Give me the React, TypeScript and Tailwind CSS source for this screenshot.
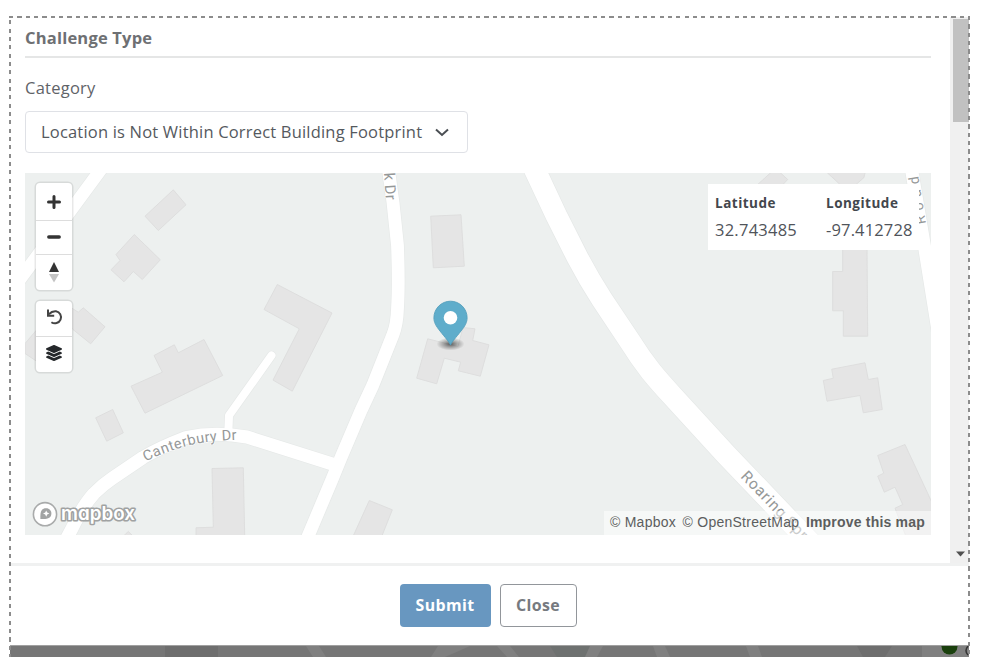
import React from 'react';
import { FaLayerGroup } from 'react-icons/fa';

const buildings = [
  '173.3,189.3 186,204.3 158.3,230 145,215.7',
  '134.3,234 160.3,259.3 142.3,279 133.3,271 124,281.3 111,269.3 120,260 116,254',
  '83.3,307.3 105,326.3 90.7,343.3 73,329 60,315 66,304 78.3,311.7',
  '25,343 37,329 52,345 37,361 25,353',
  '277.3,284 332,312.5 292.3,390.7 273,379.6 299.3,328.3 264,309',
  '204,339 222.7,375 145,412.7 131,385.7 162.3,371.7 154,355 174.3,344.3 178.3,352.3',
  '112.7,409 123.3,432.3 106.7,440.7 95.7,417.3',
  '212,468 243.3,467.3 244.7,536 196,536 196,527.3 213.3,526.7',
  '123,536 128.3,531 133.5,536',
  '369.3,500 392.3,509.3 381.7,536 353,536',
  '430.7,215.7 461,214.3 464.3,265.7 433.3,267.3',
  '427.7,338.3 458,346 463,327 475,328.3 472.7,340 489,344.3 480.3,375.7 458.3,370.3 460.7,361.7 444.3,357.7 436.7,383.3 416.7,377.7',
  '842.7,245 867,245 867.7,335.7 843.3,335.7 843.3,310.3 832.7,310.3 832.7,271 842.7,271',
  '831.7,368.7 865,362.3 868.3,379 877.7,377.3 882.3,409 863.3,412.3 860,395 827,400.7 823.3,380 833.3,377.7',
  '905,444 931.5,501 931.5,536 906,536 895,507.7 902.7,504 895,486.7 884.3,491.7 877.7,475.7 883.7,472.7 877.7,455',
  '757.7,184 772,171 779,171 787.7,179 782,185',
  '826,171 865.3,171 864,177 856,184 840,184',
];

const roads = [
  { d: 'M106 162 L18 281.5', width: 12.6 },
  { d: 'M387 160 L389 173 L393 202 L397.5 245 Q399 284 397.5 308 Q397 324 393 334 L372.7 385 L361 410 L341 457 L332 479 L305 543', width: 12.8 },
  { d: 'M531 161 L556.3 215 L577.5 257 Q589 279 602 299 L630 341 Q640 357 651 371 Q660 382 672 395 L726 454 L812 544', width: 21.5 },
  { d: 'M63 545 L72 528 Q83 505 94 493 Q103 484 112 478 L143 457 Q160 447 186 437 Q215 431 247 436.5 L337 465', width: 13 },
  { d: 'M228.3 432 L229 415 L271.5 355', width: 8 },
  { d: 'M910 160 L924 243 L938 330', width: 13 },
];

function MapCanvas() {
  return (
    <svg className="block h-full w-full" viewBox="25 172.5 906 362.5" preserveAspectRatio="none">
      <rect x="25" y="172" width="906" height="364" fill="#edf0ef" />
      {buildings.map((points) => (
        <polygon key={points} points={points} fill="#e5e5e5" stroke="#dcdddd" strokeWidth="0.9" />
      ))}
      <g fill="none" strokeLinecap="round" strokeLinejoin="round">
        {roads.map((road) => (
          <path key={road.d} d={road.d} stroke="#e6e9e8" strokeWidth={road.width + 1.4} />
        ))}
        {roads.map((road) => (
          <path key={road.d} d={road.d} stroke="#fff" strokeWidth={road.width} />
        ))}
      </g>

      {/* Street names */}
      <defs>
        <path id="canterbury" d="M145.5 461 Q178 445.5 207 441.5 Q222 439.5 245 439" />
        <path id="roaring" d="M740 476.5 L812 551" />
        <path id="park" d="M384 172.5 L387.5 225" />
        <path id="rightRoad" d="M926 223 L916.5 165" />
      </defs>
      <g fill="#959898" fontFamily="Roboto, sans-serif" fontSize="14" stroke="#fff" strokeWidth="1.2" paintOrder="stroke">
        <text fontSize="14.5" textLength="95"><textPath href="#canterbury">Canterbury Dr</textPath></text>
        <text fontSize="15.5" letterSpacing="0.8"><textPath href="#roaring">Roaring Spr</textPath></text>
        <text fontSize="15" letterSpacing="0.3"><textPath href="#park">k Dr</textPath></text>
        <text letterSpacing="5.4"><textPath href="#rightRoad">Road</textPath></text>
      </g>

      {/* Marker */}
      <defs>
        <radialGradient id="shadow">
          <stop offset="0" stopColor="#000" stopOpacity="0.6" />
          <stop offset="0.5" stopColor="#000" stopOpacity="0.28" />
          <stop offset="1" stopColor="#000" stopOpacity="0" />
        </radialGradient>
      </defs>
      <ellipse cx="450.5" cy="343.5" rx="14" ry="6.5" fill="url(#shadow)" />
      <path
        d="M450.5 344.6 C449 341 445 337 440 330.5 C436 325.5 433.9 322 433.9 317.3 A16.6 16.6 0 0 1 467.1 317.3 C467.1 322 465 325.5 461 330.5 C456 337 452 341 450.5 344.6 Z"
        fill="#5fadcb"
        stroke="#559fbc"
        strokeWidth="0.9"
      />
      <circle cx="450.5" cy="317.3" r="6.8" fill="#fff" />
    </svg>
  );
}

function MapboxLogo() {
  return (
    <svg className="absolute bottom-1 left-1.5 h-[32px] w-[112px]" viewBox="31 498.5 112 32">
      <circle cx="45" cy="513.7" r="11.6" fill="#fff" stroke="#a9abab" strokeWidth="1.6" />
      <path d="M40.4 518.4 C40 511 41.5 507.8 46 507.8 C49.6 507.8 51.4 510.4 51.4 513 C51.4 517.5 47.5 519 40.4 518.4 Z" fill="#a2a4a4" />
      <path d="M46.2 510 l1 2 2.2 1 -2.2 1 -1 2.2 -1 -2.2 -2.2 -1 2.2 -1 Z" fill="#fff" />
      <text
        x="61"
        y="519.5"
        fontSize="19"
        fontWeight="600"
        textLength="74"
        lengthAdjust="spacingAndGlyphs"
        fill="#fff"
        stroke="#a0a2a2"
        strokeWidth="3.2"
        paintOrder="stroke"
        strokeLinejoin="round"
        className="font-['Inter'] [font-feature-settings:'cv11']"
      >
        mapbox
      </text>
    </svg>
  );
}

function MapControls() {
  return (
    <div className="absolute top-[10.5px] left-[11px] flex w-[36px] flex-col gap-[11px] text-[#333]">
      <div className="flex h-[107px] flex-col divide-y divide-[#ddd] rounded-[4px] bg-white shadow-[0_0_0_1.5px_rgba(0,0,0,0.09)]">
        <button className="flex h-[38px] items-center justify-center">
          <svg className="h-[14px] w-[14px]" viewBox="0 0 14 14" stroke="currentColor" strokeWidth="3" strokeLinecap="round">
            <path d="M7 1.5v11M1.5 7h11" />
          </svg>
        </button>
        <button className="flex h-[34px] items-center justify-center pb-px">
          <svg className="h-[14px] w-[14px]" viewBox="0 0 14 14" stroke="currentColor" strokeWidth="3.4" strokeLinecap="round">
            <path d="M1.8 7h10.4" />
          </svg>
        </button>
        <button className="flex flex-1 items-center justify-center">
          <svg className="h-[21px] w-[12px]" viewBox="0 0 12 21">
            <path d="M6 0 L11 10 H1 Z" fill="#333" />
            <path d="M1 12 H11 L6 20.5 Z" fill="#c4c4c4" />
          </svg>
        </button>
      </div>
      <div className="flex h-[71px] flex-col divide-y divide-[#ddd] rounded-[4px] bg-white shadow-[0_0_0_1.5px_rgba(0,0,0,0.09)]">
        <button className="flex h-[36px] items-center justify-center pb-0.5">
          <svg className="h-[17px] w-[17px]" viewBox="0 0 17 17" fill="none" stroke="#444" strokeWidth="2">
            <path d="M2.8 5.2 C5.5 2.4 8 2 10 2.2 A6.1 6.1 0 1 1 5.4 13.2" />
            <path d="M2 0.5v6.3h6.2" />
          </svg>
        </button>
        <button className="flex flex-1 items-center justify-center pb-1">
          <FaLayerGroup className="h-[16px] w-[16px] text-[#25282b]" />
        </button>
      </div>
    </div>
  );
}

function Coordinates() {
  return (
    <div className="absolute top-[11px] left-[683px] flex h-[66px] w-[211px] gap-[28px] bg-white pt-[9px] pl-[7px] text-[#50545a]">
      <div className="w-[83px]">
        <p className="text-[13.5px] leading-[20px] font-bold tracking-[0.5px] text-[#43474d]">Latitude</p>
        <p className="mt-[4px] text-[16.5px] leading-[26px] tracking-[0.25px]">32.743485</p>
      </div>
      <div>
        <p className="text-[13.5px] leading-[20px] font-bold tracking-[0.5px] text-[#43474d]">Longitude</p>
        <p className="mt-[4px] text-[16.5px] leading-[26px] tracking-[0.15px]">-97.412728</p>
      </div>
    </div>
  );
}

function Scrollbar() {
  return (
    <div className="flex w-[19px] flex-col items-end justify-between bg-[#f0f0f0] pt-[2px]">
      <div className="h-[103px] w-[16px] bg-[#c1c1c1]" />
      <svg className="mr-[4px] mb-[6px] h-[6px] w-[9px]" viewBox="0 0 9 6">
        <path d="M0 0.5h9L4.5 5.5z" fill="#505050" />
      </svg>
    </div>
  );
}

// Page behind the dialog, dimmed by the backdrop
function Backdrop() {
  return (
    <svg className="block h-[12px] w-full border-t border-[#a0a0a0]" viewBox="10 646 959 11" preserveAspectRatio="none">
      <rect x="10" y="646" width="959" height="11" fill="#767676" />
      <path d="M165 646h53v11h-53zM857 646h35l-7 11h-22z" fill="#6e6e6e" />
      <path d="M550 646h50l-8 11h-35z" fill="#6e7170" />
      <path d="M306 646h13l7 11h-13zM438 646h32l-25 11h-14zM497 646h13l9 11h-12zM590 646h13l-6 11h-12zM653 646h12l5 11h-13zM746 646h12l4 11h-12zM922 646h47v11h-47z" fill="#808080" />
      <circle cx="949.5" cy="646.5" r="8" fill="#1a400d" />
      <path d="M968 646 q-4 5 0 9" fill="none" stroke="#333" strokeWidth="1.5" />
    </svg>
  );
}

export default function App() {
  return (
    <div className="h-[658px] w-[981px] overflow-hidden bg-white pt-[17px] pl-[10px] font-['Open_Sans',sans-serif] text-[#5f6368]">
      <div className="relative flex h-[640px] w-[959px] flex-col bg-white">
        {/* Dialog body */}
        <div className="flex h-[546px]">
          <div className="flex-1 pl-[15px]">
            <div className="w-[906px]">
              <h2 className="h-[41px] border-b-2 border-[#e5e6e6] pt-[8px] text-[16.5px] leading-[26px] font-bold tracking-[0.2px] text-[#6e7073]">
                Challenge Type
              </h2>
              <p className="pt-[17px] text-[16.5px] leading-[26px] tracking-[0.25px]">Category</p>
              <button className="mt-[10px] flex h-[42px] w-[443px] items-center rounded-[4px] border-[1.5px] border-[#dfe1e6] pl-[15px] text-[16.5px] text-[#55595e]">
                <span className="tracking-[0.19px] whitespace-nowrap">Location is Not Within Correct Building Footprint</span>
                <svg className="ml-auto mr-[18px] h-[9px] w-[14px]" viewBox="0 0 14 9" fill="none" stroke="#4a4e53" strokeWidth="2">
                  <path d="M1 1.5 L7 7 L13 1.5" />
                </svg>
              </button>
              <div className="relative mt-[19.5px] h-[362.5px] overflow-hidden">
                <MapCanvas />
                <MapControls />
                <Coordinates />
                <MapboxLogo />
                <div className="absolute right-0 bottom-0 flex h-[24.5px] w-[327px] items-center justify-between bg-white/50 px-[6px] font-['Liberation_Sans',sans-serif] text-[14px] whitespace-nowrap text-[#5c5e5e]">
                  <span className="tracking-[0.25px]">© Mapbox</span>
                  <span className="tracking-[0.25px]">© OpenStreetMap</span>
                  <span className="font-bold tracking-[0.2px]">Improve this map</span>
                </div>
              </div>
            </div>
          </div>
          <Scrollbar />
        </div>

        {/* Footer */}
        <div className="flex h-[82px] justify-center border-t-[3px] border-[#f0f1f1] pt-[18px] pr-[3px] text-[15.9px] leading-[23px] font-bold tracking-[0.4px]">
          <button className="h-[43px] w-[91px] rounded-[4px] bg-[#6897c0] text-white">Submit</button>
          <button className="ml-[9px] h-[43px] w-[77px] rounded-[4px] border-[1.5px] border-[#92969b] text-[#767a80]">Close</button>
        </div>
        <Backdrop />

        {/* Dashed outline */}
        <div className="absolute -top-px -left-px h-[2px] w-[961px] bg-[repeating-linear-gradient(90deg,#8c8c8c_0_4.17px,transparent_4.17px_8.34px)]" />
        <div className="absolute -top-px -left-px h-[641px] w-[2px] bg-[repeating-linear-gradient(180deg,transparent_0_4.17px,#8c8c8c_4.17px_8.34px)]" />
        <div className="absolute -top-px left-[958px] h-[641px] w-[2px] bg-[repeating-linear-gradient(180deg,#8c8c8c_0_4.17px,transparent_4.17px_8.34px)]" />
      </div>
    </div>
  );
}
